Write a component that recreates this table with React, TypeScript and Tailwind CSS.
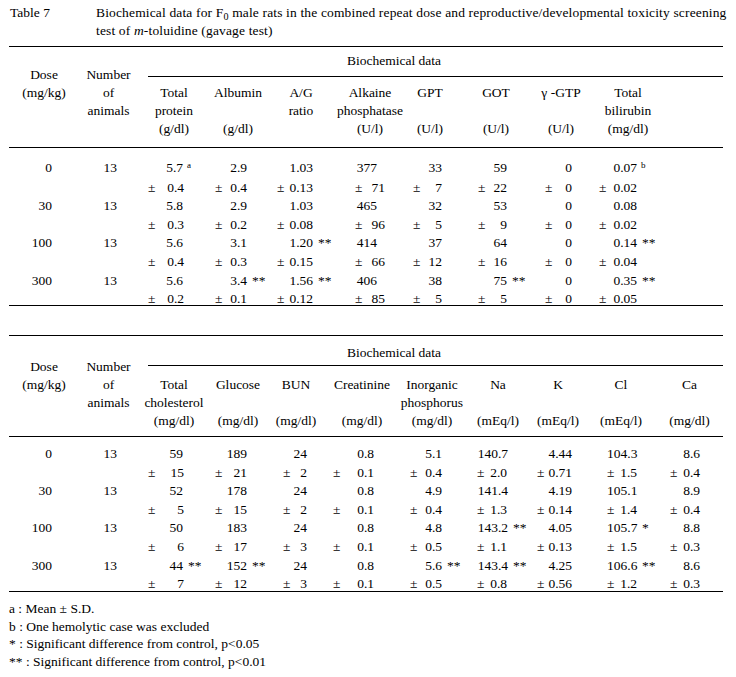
import React from 'react';

type Col = { pad: string; mean: string; sd: string };
type Cell = [string, string, string?];
type Row = { dose: string; cells: Cell[] };

const cols1: Col[] = [
  { pad: 'pl-[10px]', mean: 'w-[35px]', sd: 'w-[36px]' },
  { pad: 'pl-[5px]', mean: 'w-[32px]', sd: 'w-[32px]' },
  { pad: 'pl-[11px]', mean: 'w-[36px]', sd: 'w-[36px]' },
  { pad: 'pl-[19px]', mean: 'w-[22px]', sd: 'w-[30px]' },
  { pad: 'pl-[9px]', mean: 'w-[29px]', sd: 'w-[29px]' },
  { pad: 'pl-[22px]', mean: 'w-[29px]', sd: 'w-[29px]' },
  { pad: 'pl-[9px]', mean: 'w-[27px]', sd: 'w-[27px]' },
  { pad: 'pl-[13px]', mean: 'w-[38px]', sd: 'w-[38px]' },
];

const cols2: Col[] = [
  { pad: 'pl-[10px]', mean: 'w-[35px]', sd: 'w-[36px]' },
  { pad: 'pl-[5px]', mean: 'w-[32px]', sd: 'w-[32px]' },
  { pad: 'pl-[17px]', mean: 'w-[24px]', sd: 'w-[24px]' },
  { pad: 'pl-[7px]', mean: 'w-[41px]', sd: 'w-[41px]' },
  { pad: 'pl-[12px]', mean: 'w-[32px]', sd: 'w-[32px]' },
  { pad: 'pl-[11px]', mean: 'w-[31px]', sd: 'w-[30px]' },
  { pad: 'pl-[7px]', mean: 'w-[35px]', sd: 'w-[35px]' },
  { pad: 'pl-[21px]', mean: 'w-[30px]', sd: 'w-[30px]' },
  { pad: 'pl-[14px]', mean: 'w-[30px]', sd: 'w-[30px]' },
];

const heads1 = [
  ['Total', 'protein', '(g/dl)'],
  ['Albumin', '', '(g/dl)'],
  ['A/G', 'ratio', ''],
  ['Alkaine', 'phosphatase', '(U/l)'],
  ['GPT', '', '(U/l)'],
  ['GOT', '', '(U/l)'],
  ['\u03b3 -GTP', '', '(U/l)'],
  ['Total', 'bilirubin', '(mg/dl)'],
  ['', '', ''],
];

const heads2 = [
  ['Total', 'cholesterol', '(mg/dl)'],
  ['Glucose', '', '(mg/dl)'],
  ['BUN', '', '(mg/dl)'],
  ['Creatinine', '', '(mg/dl)'],
  ['Inorganic', 'phosphorus', '(mg/dl)'],
  ['Na', '', '(mEq/l)'],
  ['K', '', '(mEq/l)'],
  ['Cl', '', '(mEq/l)'],
  ['Ca', '', '(mg/dl)'],
];

const rows1: Row[] = [
  { dose: '0', cells: [['5.7', '0.4', 'a'], ['2.9', '0.4'], ['1.03', '0.13'], ['377', '71'], ['33', '7'], ['59', '22'], ['0', '0'], ['0.07', '0.02', 'b']] },
  { dose: '30', cells: [['5.8', '0.3'], ['2.9', '0.2'], ['1.03', '0.08'], ['465', '96'], ['32', '5'], ['53', '9'], ['0', '0'], ['0.08', '0.02']] },
  { dose: '100', cells: [['5.6', '0.4'], ['3.1', '0.3'], ['1.20', '0.15', '**'], ['414', '66'], ['37', '12'], ['64', '16'], ['0', '0'], ['0.14', '0.04', '**']] },
  { dose: '300', cells: [['5.6', '0.2'], ['3.4', '0.1', '**'], ['1.56', '0.12', '**'], ['406', '85'], ['38', '5'], ['75', '5', '**'], ['0', '0'], ['0.35', '0.05', '**']] },
];

const rows2: Row[] = [
  { dose: '0', cells: [['59', '15'], ['189', '21'], ['24', '2'], ['0.8', '0.1'], ['5.1', '0.4'], ['140.7', '2.0'], ['4.44', '0.71'], ['104.3', '1.5'], ['8.6', '0.4']] },
  { dose: '30', cells: [['52', '5'], ['178', '15'], ['24', '2'], ['0.8', '0.1'], ['4.9', '0.4'], ['141.4', '1.3'], ['4.19', '0.14'], ['105.1', '1.4'], ['8.9', '0.4']] },
  { dose: '100', cells: [['50', '6'], ['183', '17'], ['24', '3'], ['0.8', '0.1'], ['4.8', '0.5'], ['143.2', '1.1', '**'], ['4.05', '0.13'], ['105.7', '1.5', '*'], ['8.8', '0.3']] },
  { dose: '300', cells: [['44', '7', '**'], ['152', '12', '**'], ['24', '3'], ['0.8', '0.1'], ['5.6', '0.5', '**'], ['143.4', '0.8', '**'], ['4.25', '0.56'], ['106.6', '1.2', '**'], ['8.6', '0.3']] },
];

function Mark({ m }: { m?: string }) {
  if (!m) return null;
  if (m === 'a' || m === 'b') {
    return <span className="relative -top-[4px] ml-[4px] text-[9px]">{m}</span>;
  }
  return <span className="ml-[5px]">{m}</span>;
}

interface TableProps {
  grid: string;
  headGrid: string;
  heads: string[][];
  cols: Col[];
  rows: Row[];
  leftPad: string;
  headPad: string;
  bioPad: string;
  body: string;
}

function DataTable({ grid, headGrid, heads, cols, rows, leftPad, headPad, bioPad, body }: TableProps) {
  return (
    <div className="ml-[9px] w-[714px]">
      {/* header */}
      <div className="flex h-[101px] border-t border-black">
        <div className={`w-[70px] text-center leading-[18px] ${leftPad}`}>
          Dose<br />(mg/kg)
        </div>
        <div className={`w-[59px] text-center leading-[18px] ${leftPad}`}>
          Number<br />of<br />animals
        </div>
        <div className="flex-1">
          <div className={`h-[29px] pl-[209px] leading-[17px] ${bioPad}`}>Biochemical data</div>
          <div className="ml-[10px] border-t border-black" />
          <div className={`grid leading-[18px] ${headGrid} ${headPad}`}>
            {heads.map((h, i) => (
              <div key={i} className="whitespace-nowrap text-center">
                {h[0] || '\u00a0'}<br />{h[1] || '\u00a0'}<br />{h[2] || '\u00a0'}
              </div>
            ))}
          </div>
        </div>
      </div>

      {/* body */}
      <div className={`border-t border-b border-black ${body}`}>
        {rows.map((r) => (
          <React.Fragment key={r.dose}>
            <div className={`grid leading-[18.6px] ${grid}`}>
              <div><span className="inline-block w-[43px] text-right">{r.dose}</span></div>
              <div><span className="inline-block w-[38px] text-right">13</span></div>
              {r.cells.map((c, i) => (
                <div key={i} className={`whitespace-nowrap ${cols[i].pad}`}>
                  <span className={`inline-block text-right ${cols[i].mean}`}>{c[0]}</span>
                  <Mark m={c[2]} />
                </div>
              ))}
            </div>
            <div className={`grid leading-[18.6px] ${grid}`}>
              <div />
              <div />
              {r.cells.map((c, i) => (
                <div key={i} className={`whitespace-nowrap ${cols[i].pad}`}>
                  <span className={`inline-flex justify-between ${cols[i].sd}`}>
                    <span>±</span>
                    <span>{c[1]}</span>
                  </span>
                </div>
              ))}
            </div>
          </React.Fragment>
        ))}
      </div>
    </div>
  );
}

export default function App() {
  return (
    <div className="h-[677px] w-[736px] overflow-hidden bg-white font-['Liberation_Serif',serif] text-[13.5px] text-black">
      {/* caption */}
      <div className="flex pt-[4px] leading-[18px]">
        <div className="w-[96px] pl-[10px]">Table 7</div>
        <div className="whitespace-nowrap tracking-[0.15px]">
          Biochemical data for F<sub>0</sub> male rats in the combined repeat dose and reproductive/developmental toxicity screening
          <br />
          test of <i>m</i>-toluidine (gavage test)
        </div>
      </div>

      <div className="mt-[6px]">
        <DataTable
          grid="grid-cols-[70px_59px_72px_56px_70px_68px_52px_80px_50px_84px_53px]"
          headGrid="grid-cols-[72px_56px_70px_68px_52px_80px_50px_84px_53px]"
          heads={heads1}
          cols={cols1}
          rows={rows1}
          leftPad="pt-[19px]"
          headPad="pt-[7px]"
          bioPad="pt-[5px]"
          body="h-[159px] pt-[11px]"
        />
      </div>

      <div className="mt-[29px]">
        <DataTable
          grid="grid-cols-[70px_59px_72px_56px_60px_72px_68px_64px_56px_70px_67px]"
          headGrid="grid-cols-[72px_56px_60px_72px_68px_64px_56px_70px_67px]"
          heads={heads2}
          cols={cols2}
          rows={rows2}
          leftPad="pt-[22px]"
          headPad="pt-[10px]"
          bioPad="pt-[8px]"
          body="h-[156px] pt-[8px]"
        />
      </div>

      {/* notes */}
      <div className="pl-[9px] pt-[8px] leading-[17.7px]">
        <div>a : Mean ± S.D.</div>
        <div>b : One hemolytic case was excluded</div>
        <div>* : Significant difference from control, p&lt;0.05</div>
        <div>** : Significant difference from control, p&lt;0.01</div>
      </div>
    </div>
  );
}
